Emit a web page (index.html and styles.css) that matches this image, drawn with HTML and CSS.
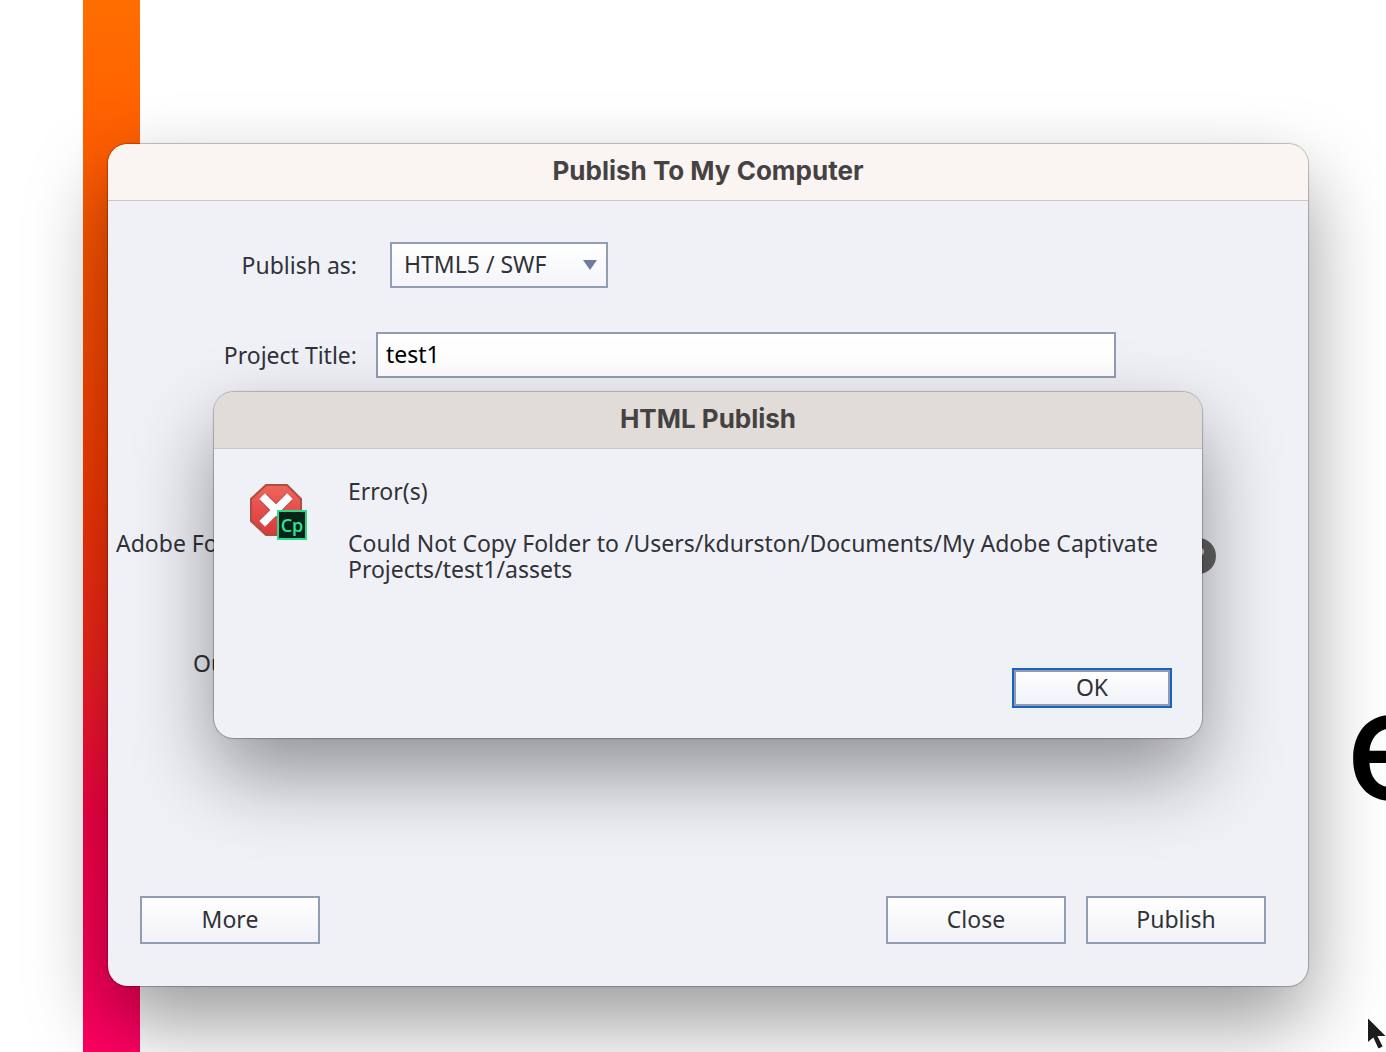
FILE: index.html
```html
<!DOCTYPE html>
<html lang="en">
<head>
    <meta charset="UTF-8">
    <meta name="viewport" content="width=device-width, initial-scale=1.0">
    <title>Publish To My Computer</title>
    <link rel="stylesheet" href="styles.css">
</head>
<body>
    <div class="desktop">
        <div class="stripe"></div>
        <span class="big-letter">e</span>

        <main class="window publish-window">
            <h1 class="titlebar">Publish To My Computer</h1>
            <form class="publish-form">
                <div class="row">
                    <label class="label" for="publishAs">Publish as:</label>
                    <div class="select-box">
                        <select id="publishAs">
                            <option>HTML5 / SWF</option>
                        </select>
                        <svg class="arrow" viewBox="0 0 14 10"><path d="M0 0H14L7 10Z" fill="#6f7b98"/></svg>
                    </div>
                </div>
                <div class="row">
                    <label class="label" for="projectTitle">Project Title:</label>
                    <input class="title-input" id="projectTitle" type="text" value="test1">
                </div>
                <div class="row fonts-row">
                    <span class="label label-fonts">Adobe Fo</span>
                    <button class="help" type="button">?</button>
                </div>
                <div class="row">
                    <span class="label label-output">Ou</span>
                </div>
                <div class="actions">
                    <button class="btn" type="button">More</button>
                    <button class="btn btn-close" type="button">Close</button>
                    <button class="btn" type="button">Publish</button>
                </div>
            </form>

            <section class="window error-window" role="alertdialog" aria-labelledby="errorTitle">
                <h2 class="titlebar" id="errorTitle">HTML Publish</h2>
                <div class="error-body">
                    <svg class="error-icon" viewBox="0 0 58 58">
                        <defs>
                            <linearGradient id="red" x1="0" y1="0" x2="0" y2="1">
                                <stop offset="0" stop-color="#f0655e"/>
                                <stop offset="1" stop-color="#d8393a"/>
                            </linearGradient>
                        </defs>
                        <path d="M16 1H37L51 15V37L37 51H16L1 37V15Z" fill="url(#red)" stroke="#a9503f" stroke-width="2"/>
                        <path d="M13 13L39 39M39 13L13 39" stroke="#c04a42" stroke-width="10"/>
                        <path d="M15 15L37 37M37 15L15 37" stroke="#fff" stroke-width="8" stroke-linecap="square"/>
                        <rect x="28" y="27" width="28" height="28" fill="#07241b" stroke="#2bd987" stroke-width="2"/>
                        <text x="42" y="48" text-anchor="middle" class="icon-text">Cp</text>
                    </svg>
                    <div class="message">
                        <p>Error(s)</p>
                        <p>Could Not Copy Folder to /Users/kdurston/Documents/My Adobe Captivate Projects/test1/assets</p>
                    </div>
                </div>
                <div class="error-actions">
                    <button class="btn btn-ok" type="button">OK</button>
                </div>
            </section>
        </main>

        <svg class="cursor" viewBox="0 0 24 38">
            <path d="M2 2V30L8 25L13 36L19 33L14 23H23Z" fill="#1c1c1c" stroke="#fff" stroke-width="2"/>
        </svg>
    </div>
</body>
</html>
```
FILE: styles.css
```css
* {
    box-sizing: border-box;
}
body {
    margin: 0;
    background: #fff;
    color: #303238;
    font-family: "Noto Sans", sans-serif;
    font-size: 23px;
    line-height: 26px;
}
button, input, select {
    font: inherit;
    color: inherit;
}
.desktop {
    position: relative;
    min-height: 100vh;
    padding: 144px 78px 65px 108px;
    overflow: hidden;
}
.stripe {
    position: absolute;
    top: 0;
    bottom: 0;
    left: 83px;
    width: 57px;
    background: linear-gradient(#ff6e00 0%, #ff5e00 14%, #f93c00 45%, #f5241c 62%, #fa0048 78%, #ff0062 100%);
}
.big-letter {
    position: absolute;
    left: 1346px;
    top: 654px;
    color: #000;
    font: 500 152px/180px Inter, sans-serif;
}

/* windows */
.window {
    background: #f0f1f7;
    border-radius: 20px;
    box-shadow: 0 0 1px 1px rgba(0, 0, 0, 0.25), 0 36px 80px rgba(0, 0, 0, 0.4);
}
.titlebar {
    margin: 0;
    height: 57px;
    padding-top: 10px;
    border-bottom: 1px solid #c8c8cc;
    border-radius: 20px 20px 0 0;
    background: #faf4f2;
    color: #454243;
    font: 700 26px/34px Inter, sans-serif;
    text-align: center;
}
.publish-window {
    position: relative;
}
.publish-form {
    padding: 41px 42px 42px 0;
}
.row {
    display: flex;
    align-items: center;
    height: 46px;
    margin-bottom: 44px;
}
.label {
    width: 249px;
    text-align: right;
}
.select-box {
    position: relative;
    width: 218px;
    margin-left: 33px;
}
.select-box select {
    display: block;
    appearance: none;
    width: 100%;
    height: 46px;
    padding: 0 12px 2px;
    border: 2px solid #929db3;
    border-radius: 0;
    background: linear-gradient(#fff, #f4f5fa);
}
.arrow {
    position: absolute;
    right: 11px;
    top: 18px;
    width: 14px;
    height: 10px;
}
.title-input {
    flex: 1;
    height: 46px;
    margin-left: 19px;
    margin-right: 150px;
    padding: 0 8px 2px;
    border: 2px solid #929db3;
    background: #fff;
    color: #000;
}
.fonts-row {
    margin-top: 142px;
    margin-bottom: 74px;
}
.label-fonts {
    padding-left: 8px;
    text-align: left;
}
.label-output {
    padding-left: 85px;
    text-align: left;
}
.help {
    width: 36px;
    height: 36px;
    margin: 26px 50px 0 auto;
    padding: 0;
    border: none;
    border-radius: 50%;
    background: #626262;
    color: #fff;
    font-size: 26px;
    font-weight: bold;
}
.actions {
    display: flex;
    gap: 20px;
    margin-top: 210px;
    padding-left: 32px;
}
.btn {
    width: 180px;
    height: 48px;
    padding: 0 0 2px;
    border: 2px solid #929db3;
    background: linear-gradient(#fff, #f1f2f8);
}
.btn-close {
    margin-left: auto;
}

/* error dialog */
.error-window {
    position: absolute;
    top: 248px;
    left: 106px;
    right: 106px;
}
.error-window .titlebar {
    background: #e1dcd8;
}
.error-body {
    display: flex;
    align-items: flex-start;
    gap: 40px;
    padding: 29px 36px 0;
}
.error-icon {
    flex: none;
    width: 58px;
    height: 58px;
    margin-top: 6px;
}
.icon-text {
    fill: #2fe592;
    font: 600 18px "Open Sans", sans-serif;
}
.message p {
    margin: 0 0 26px;
}
.error-actions {
    display: flex;
    justify-content: flex-end;
    padding: 60px 30px 30px;
}
.btn-ok {
    width: 160px;
    height: 40px;
    outline: 2px solid #1763bf;
    outline-offset: -2px;
    box-shadow: inset 0 0 0 2px #929db3;
}

.cursor {
    position: absolute;
    left: 1365px;
    top: 1014px;
    width: 24px;
    height: 38px;
}
```
